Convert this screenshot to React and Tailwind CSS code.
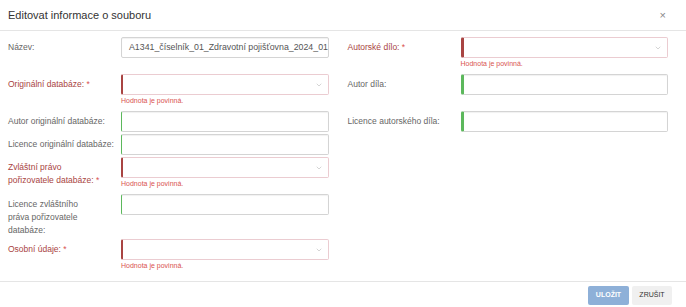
import React from "react";
import { ChevronDown } from "lucide-react";

const font = { fontFamily: '"Liberation Sans", Arial, sans-serif' };

const Label = ({ lines, required }) => (
  <div
    className={`w-[113px] shrink-0 whitespace-nowrap pt-[4px] text-[8.5px] leading-[13px] ${
      required ? "text-[#a94442]" : "text-[#666]"
    }`}
  >
    {lines.map((l, i) => (
      <div key={i}>
        {l}
        {required && i === lines.length - 1 && (
          <span className="text-[#d9534f]"> *</span>
        )}
      </div>
    ))}
  </div>
);

const TextField = ({ value, mark = "none" }) => {
  const left =
    mark === "thin"
      ? "border-l-[#5cb85c]"
      : mark === "thick"
      ? "border-l-[3px] border-l-[#5cb85c]"
      : "";
  return (
    <div
      className={`h-[21px] w-full overflow-hidden whitespace-nowrap rounded-[2px] border border-[#d4d4d4] bg-white pl-[7px] text-[8.8px] leading-[19px] text-[#555] shadow-[inset_0_1px_1px_rgba(0,0,0,0.06)] ${left}`}
    >
      {value}
    </div>
  );
};

const SelectField = ({ thick }) => (
  <div>
    <div
      className={`flex h-[21px] w-full items-center justify-end rounded-[2px] border border-[#ebccd1] bg-white pr-[5px] ${
        thick ? "border-l-[3px] border-l-[#a94442]" : "border-l-[2px] border-l-[#a94442]"
      }`}
    >
      <ChevronDown size={8} strokeWidth={1.5} className="text-[#aaa]" />
    </div>
    <div className="h-[14px] pt-[1px] text-[7px] leading-[10px] text-[#d9534f]">
      Hodnota je povinná.
    </div>
  </div>
);

const Row = ({ label, required, children }) => (
  <div className="flex">
    <Label lines={label} required={required} />
    <div className="min-w-0 flex-1">{children}</div>
  </div>
);

export default function App() {
  return (
    <div className="h-[307px] w-[686px] overflow-hidden bg-white" style={font}>
      <div className="flex h-[31px] items-center justify-between border-b border-[#e5e5e5] pl-2 pr-[20px]">
        <h4 className="text-[11px] text-[#333]">Editovat informace o souboru</h4>
        <span className="text-[11px] leading-none text-[#888]">×</span>
      </div>

      <div className="grid h-[250px] grid-cols-2 content-start gap-x-[19px] gap-y-[2px] pl-2 pr-[18px] pt-[6px]">
        <Row label={["Název:"]}>
          <TextField value="A1341_číselník_01_Zdravotní pojišťovna_2024_01.csv" />
        </Row>
        <Row label={["Autorské dílo:"]} required>
          <SelectField thick />
        </Row>

        <Row label={["Originální databáze:"]} required>
          <SelectField />
        </Row>
        <Row label={["Autor díla:"]}>
          <TextField mark="thick" />
        </Row>

        <Row label={["Autor originální databáze:"]}>
          <TextField mark="thin" />
        </Row>
        <Row label={["Licence autorského díla:"]}>
          <TextField mark="thick" />
        </Row>

        <Row label={["Licence originální databáze:"]}>
          <TextField mark="thin" />
        </Row>
        <div />

        <Row label={["Zvláštní právo", "pořizovatele databáze:"]} required>
          <SelectField />
        </Row>
        <div />

        <Row label={["Licence zvláštního", "práva pořizovatele", "databáze:"]}>
          <TextField mark="thin" />
        </Row>
        <div />

        <Row label={["Osobní údaje:"]} required>
          <SelectField />
        </Row>
        <div />
      </div>

      <div className="flex justify-end gap-[3px] border-t border-[#e5e5e5] pr-[14px] pt-[4px]">
        <button className="h-[19px] w-[41px] rounded-[2px] bg-[#8eb0d8] text-[7px] font-bold text-white">
          ULOŽIT
        </button>
        <button className="h-[19px] w-[40px] rounded-[2px] bg-[#f0f0f0] text-[7px] text-[#333]">
          ZRUŠIT
        </button>
      </div>
    </div>
  );
}
